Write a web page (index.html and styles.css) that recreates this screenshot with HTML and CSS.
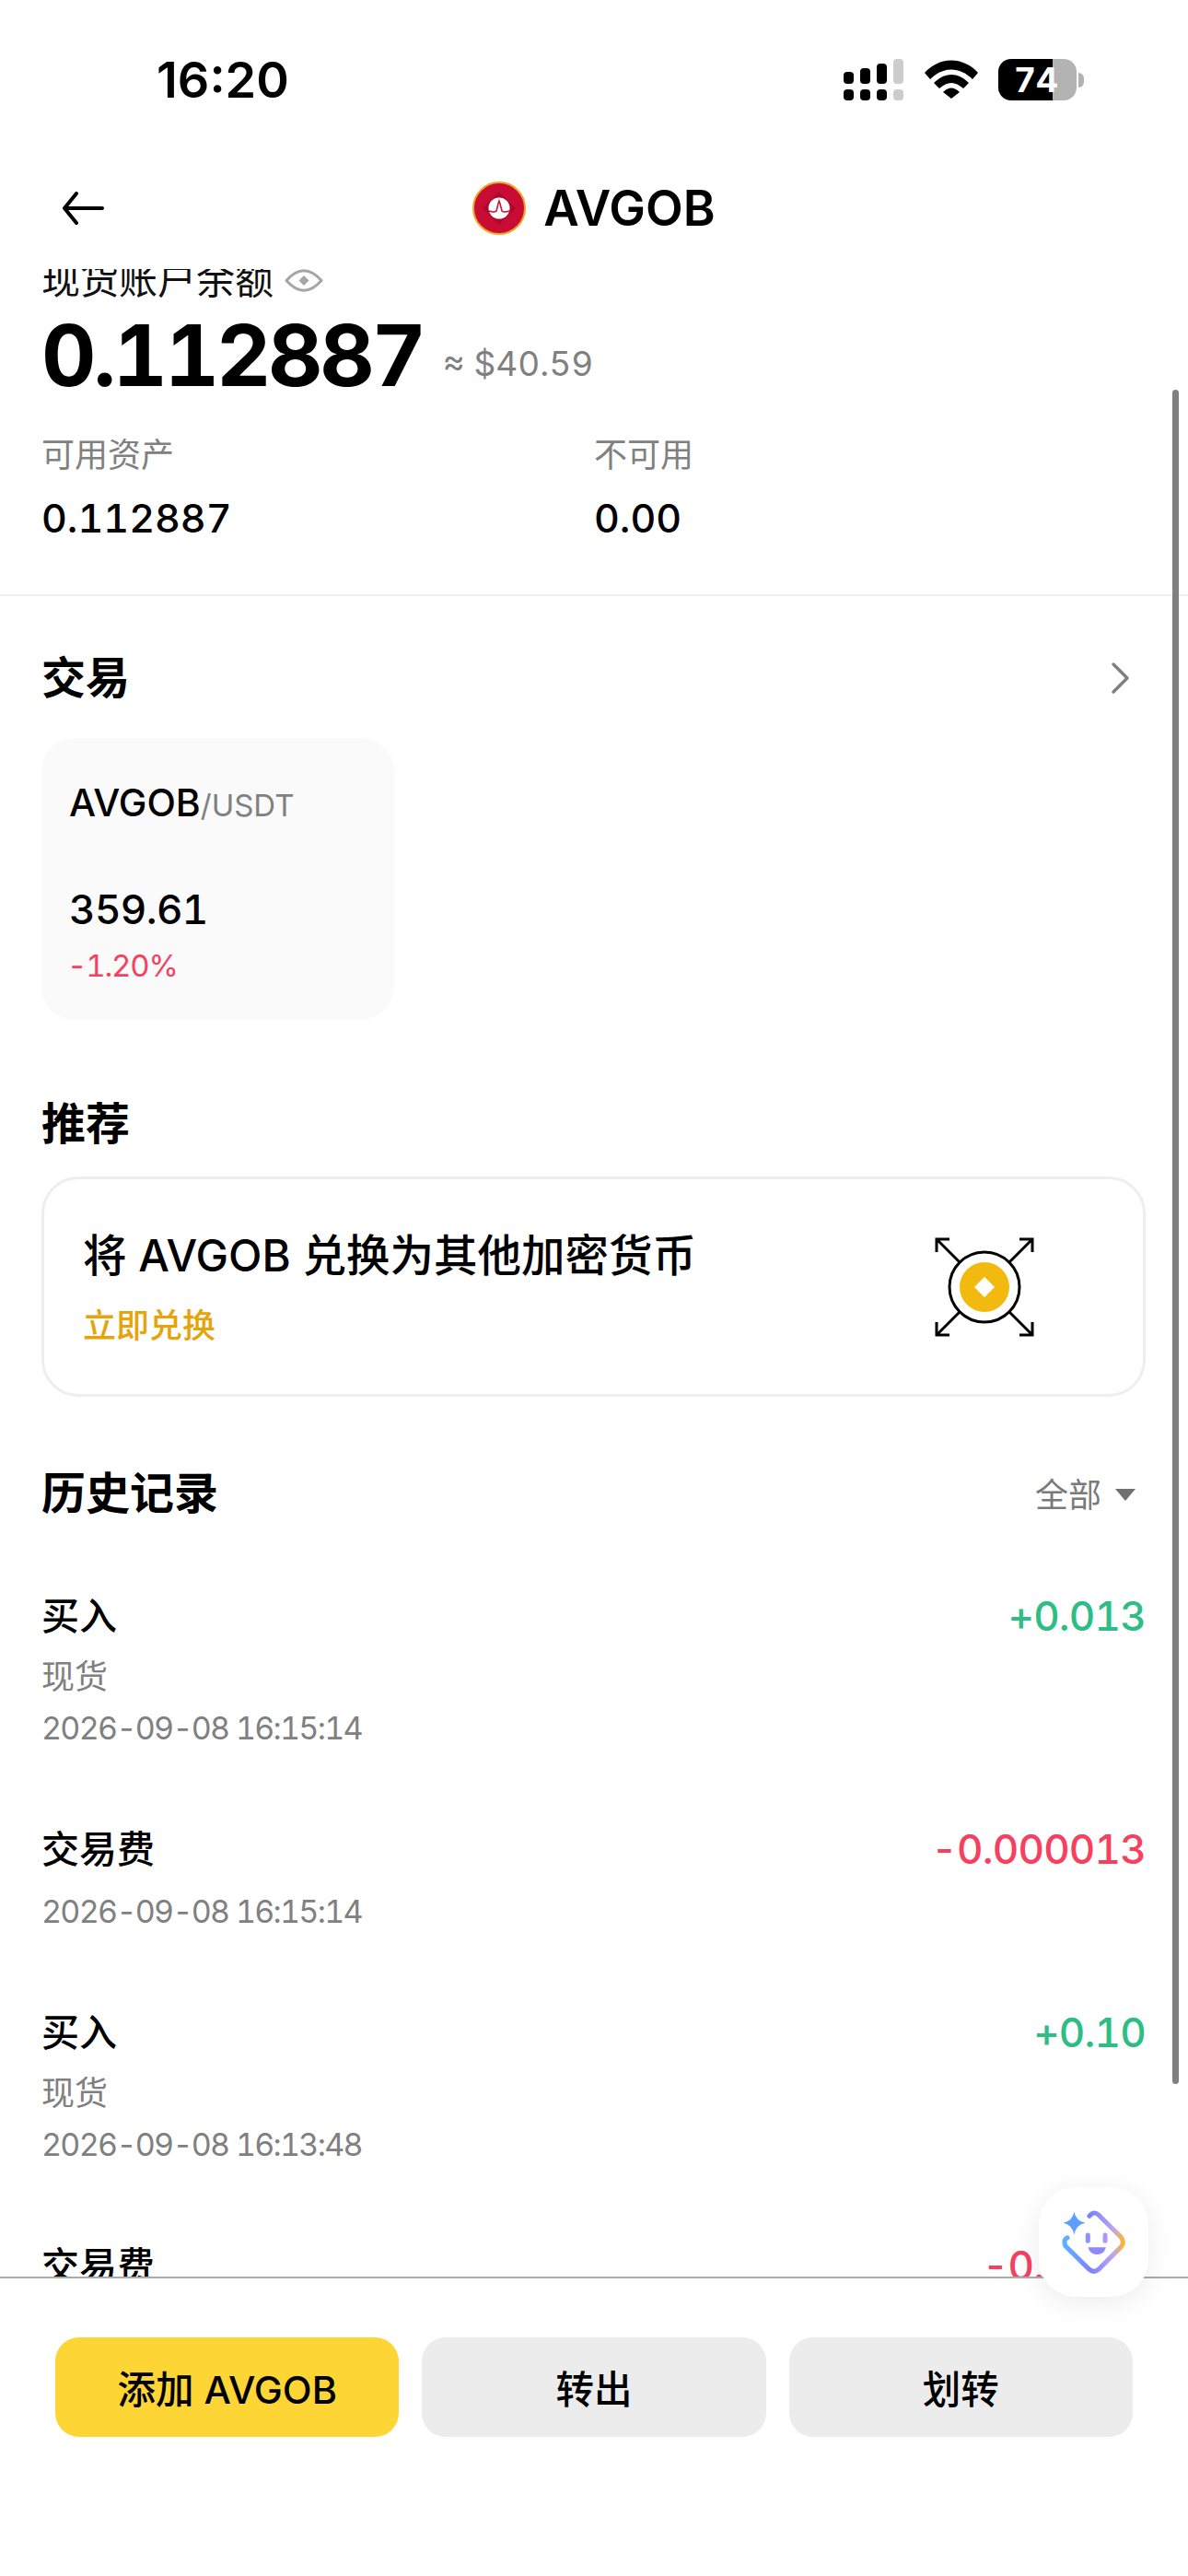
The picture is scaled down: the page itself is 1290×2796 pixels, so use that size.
FILE: index.html
```html
<!DOCTYPE html>
<html lang="zh">
<head>
<meta charset="UTF-8">
<meta name="viewport" content="width=device-width, initial-scale=1.0">
<title>AVGOB</title>
<link rel="stylesheet" href="styles.css">
</head>
<body>
    <div class="phone">
        <div class="status-bar">
            <div class="time">16:20</div>
            <div class="status-icons">
                <svg class="signal" width="65" height="45" viewBox="0 0 65 45">
                    <rect x="0" y="14" width="11" height="13" rx="4"/>
                    <rect x="18" y="10" width="11" height="17" rx="4"/>
                    <rect x="36" y="5" width="11" height="22" rx="4"/>
                    <rect x="54" y="0" width="11" height="27" rx="4" fill="#ccc"/>
                    <rect x="0" y="33" width="11" height="12" rx="4"/>
                    <rect x="18" y="33" width="11" height="12" rx="4"/>
                    <rect x="36" y="33" width="11" height="12" rx="4"/>
                    <rect x="54" y="33" width="11" height="12" rx="4" fill="#ccc"/>
                </svg>
                <svg class="wifi" width="58" height="42" viewBox="0 0 58 42">
                    <path d="M0 14 C16 -4 42 -4 58 14 L52 21 C38 7 20 7 6 21 Z"/>
                    <path d="M10 25 C22 13 36 13 48 25 L42 31 C33 23 25 23 16 31 Z"/>
                    <path d="M20 35 C26 29 32 29 38 35 L29 42 Z"/>
                </svg>
                <div class="battery-wrap">
                    <div class="battery">74</div>
                    <div class="battery-nub"></div>
                </div>
            </div>
        </div>

        <div class="header">
            <svg class="back" width="46" height="36" viewBox="0 0 46 36">
                <path d="M16 2 L3 18 L16 34 M3 18 H44" fill="none" stroke="#000" stroke-width="4" stroke-linecap="round" stroke-linejoin="round"/>
            </svg>
            <div class="coin">
                <svg width="58" height="58" viewBox="0 0 58 58">
                    <circle cx="29" cy="29" r="28" fill="#c90c33" stroke="#f2a323" stroke-width="2"/>
                    <path d="M29 11 L47 29 L29 47 L11 29 Z" fill="#ab0a2c"/>
                    <circle cx="29" cy="29" r="11.5" fill="#fff"/>
                    <path d="M18 32 Q24 34 26 32 L28 24 L29 21 L30 24 L32 32 Q34 34 40 32" fill="none" stroke="#c90c33" stroke-width="1.5"/>
                </svg>
                <span class="coin-name">AVGOB</span>
            </div>
        </div>

        <div class="scroll">
            <div class="content">
                <div class="balance-section">
                    <div class="label-row">
                        <span>现货账户余额</span>
                        <svg width="42" height="29" viewBox="0 0 42 29">
                            <path d="M2 14.5 Q21 -7 40 14.5 Q21 36 2 14.5 Z" fill="none" stroke="#a6a6a6" stroke-width="3" stroke-linejoin="round"/>
                            <path d="M21 9 L26.5 14.5 L21 20 L15.5 14.5 Z" fill="#a6a6a6"/>
                        </svg>
                    </div>
                    <div class="balance-row">
                        <span class="balance">0.112887</span>
                        <span class="approx">≈ $40.59</span>
                    </div>
                    <div class="assets">
                        <div class="asset">
                            <div class="asset-label">可用资产</div>
                            <div class="asset-value">0.112887</div>
                        </div>
                        <div class="asset">
                            <div class="asset-label">不可用</div>
                            <div class="asset-value">0.00</div>
                        </div>
                    </div>
                </div>

                <div class="section">
                    <div class="section-title trade-title">
                        <span>交易</span>
                        <svg width="24" height="36" viewBox="0 0 24 36">
                            <path d="M4 3 L19 18 L4 33" fill="none" stroke="#808080" stroke-width="3.5" stroke-linecap="round" stroke-linejoin="round"/>
                        </svg>
                    </div>
                    <div class="market-card">
                        <div class="pair">AVGOB<span class="quote">/USDT</span></div>
                        <div class="price">359.61</div>
                        <div class="change">-1.20%</div>
                    </div>

                    <div class="section-title recommend-title">推荐</div>
                    <div class="promo">
                        <div>
                            <div class="promo-title">将 AVGOB 兑换为其他加密货币</div>
                            <div class="promo-link">立即兑换</div>
                        </div>
                        <svg width="108" height="108" viewBox="0 0 108 108">
                            <g fill="none" stroke="#000" stroke-width="3">
                                <circle cx="54" cy="54" r="38"/>
                                <path d="M27 27 L2 2 M2 16 V2 H16 M81 27 L106 2 M92 2 H106 V16 M27 81 L2 106 M2 92 V106 H16 M81 81 L106 106 M92 106 H106 V92"/>
                            </g>
                            <circle cx="54" cy="54" r="27" fill="#f2ba0e"/>
                            <path d="M54 43 L65 54 L54 65 L43 54 Z" fill="#fff"/>
                        </svg>
                    </div>

                    <div class="history-head">
                        <div class="section-title">历史记录</div>
                        <div class="filter">全部<span class="caret"></span></div>
                    </div>

                    <div class="records">
                        <div class="record">
                            <div>
                                <div class="record-title">买入</div>
                                <div class="record-sub">现货</div>
                                <div class="record-date">2026-09-08 16:15:14</div>
                            </div>
                            <div class="amount up">+0.013</div>
                        </div>
                        <div class="record">
                            <div>
                                <div class="record-title">交易费</div>
                                <div class="record-date fee-date">2026-09-08 16:15:14</div>
                            </div>
                            <div class="amount down">-0.000013</div>
                        </div>
                        <div class="record">
                            <div>
                                <div class="record-title">买入</div>
                                <div class="record-sub">现货</div>
                                <div class="record-date">2026-09-08 16:13:48</div>
                            </div>
                            <div class="amount up">+0.10</div>
                        </div>
                        <div class="record">
                            <div>
                                <div class="record-title">交易费</div>
                                <div class="record-date fee-date">2026-09-08 16:13:48</div>
                            </div>
                            <div class="amount down">-0.0001</div>
                        </div>
                    </div>
                </div>
            </div>
            <div class="scrollbar"></div>
        </div>

        <div class="footer">
            <button class="btn primary">添加 AVGOB</button>
            <button class="btn">转出</button>
            <button class="btn">划转</button>
        </div>

        <div class="assistant">
            <svg width="77" height="75" viewBox="177 168 230 224">
                <defs>
                    <linearGradient id="ring" x1="0" y1="0" x2="1" y2="0">
                        <stop offset="0" stop-color="#5cb2ff"/>
                        <stop offset="0.45" stop-color="#7c84fb"/>
                        <stop offset="0.82" stop-color="#b9a2f5"/>
                        <stop offset="1" stop-color="#f6b73c"/>
                    </linearGradient>
                </defs>
                <path d="M207 266 Q193 272 200 292 L278 369 Q293 381 308 369 L381 296 Q393 280 381 264 L308 192 Q293 178 278 196" fill="none" stroke="url(#ring)" stroke-width="15" stroke-linecap="round"/>
                <path d="M229 182 Q235 212 265 218 Q235 224 229 256 Q223 224 193 218 Q223 212 229 182 Z" fill="#5c9fff"/>
                <rect x="266" y="250" width="15" height="34" rx="7" fill="#8f93fb"/>
                <rect x="322" y="250" width="15" height="34" rx="7" fill="#a99cf8"/>
                <path d="M274 297 H332 Q326 320 303 320 Q280 320 274 297 Z" fill="#8f87fa"/>
            </svg>
        </div>
    </div>
</body>
</html>
```

FILE: styles.css
```css
* {
    box-sizing: border-box;
}
body {
    margin: 0;
    background: #fff;
    color: #000;
    font-family: Inter, "Noto Sans CJK SC", sans-serif;
    font-variant-numeric: tabular-nums;
}
.phone {
    position: relative;
    width: 1290px;
    height: 2796px;
    display: flex;
    flex-direction: column;
    overflow: hidden;
}
.status-bar {
    height: 165px;
    flex-shrink: 0;
    display: flex;
    justify-content: space-between;
    align-items: flex-start;
    padding: 57px 113px 0 170px;
}
.time {
    font-size: 54px;
    line-height: 60px;
    font-weight: 600;
    font-variant-numeric: normal;
}
.status-icons {
    display: flex;
    align-items: flex-start;
    padding-top: 7px;
}
.signal {
    margin-right: 23px;
}
.wifi {
    margin-top: 1px;
    margin-right: 22px;
}
.battery-wrap {
    display: flex;
    align-items: center;
}
.battery {
    width: 85px;
    height: 45px;
    border-radius: 14px;
    background: linear-gradient(to right, #000 0, #000 70%, #b3b3b3 70%, #b3b3b3 100%);
    color: #fff;
    font-size: 37px;
    line-height: 45px;
    font-weight: 700;
    padding-left: 17px;
}
.battery-nub {
    width: 6px;
    height: 16px;
    margin-left: 2px;
    border-radius: 0 8px 8px 0;
    background: #b3b3b3;
}
.header {
    height: 127px;
    flex-shrink: 0;
    display: flex;
    align-items: center;
    justify-content: center;
    position: relative;
    padding-bottom: 6px;
}
.back {
    position: absolute;
    left: 67px;
    top: 43px;
}
.coin {
    display: flex;
    align-items: center;
    gap: 19px;
}
.coin svg {
    display: block;
}
.coin-name {
    font-size: 53px;
    line-height: 60px;
    font-weight: 600;
}
.scroll {
    flex: 1;
    position: relative;
    overflow: hidden;
}
.content {
    margin-top: -10px;
}
.balance-section {
    padding: 0 45px 57px;
    border-bottom: 2px solid #eee;
}
.label-row {
    display: flex;
    align-items: center;
    gap: 12px;
    font-size: 42px;
    line-height: 44px;
    color: #111;
}
.balance-row {
    display: flex;
    align-items: center;
    margin-top: 5px;
    line-height: 110px;
}
.balance {
    font-size: 92px;
    font-weight: 700;
    letter-spacing: -3.3px;
}
.approx {
    margin: 18px 0 0 21px;
    font-size: 37px;
    line-height: 44px;
    color: #808080;
}
.assets {
    display: flex;
    margin-top: 31px;
}
.asset {
    width: 600px;
}
.asset-label {
    font-size: 36px;
    line-height: 44px;
    color: #808080;
}
.asset-value {
    margin-top: 20px;
    font-size: 43px;
    line-height: 52px;
    font-weight: 500;
}
.section {
    padding: 59px 46px 0 45px;
}
.section-title {
    font-size: 48px;
    line-height: 60px;
    font-weight: 700;
}
.trade-title {
    display: flex;
    justify-content: space-between;
    align-items: center;
    padding-right: 15px;
}
.market-card {
    width: 383px;
    height: 306px;
    margin-top: 35px;
    padding: 45px 30px 0;
    background: #fafafa;
    border-radius: 36px;
}
.pair {
    font-size: 41px;
    line-height: 50px;
    font-weight: 500;
}
.quote {
    font-size: 33px;
    font-weight: 400;
    color: #808080;
}
.price {
    margin-top: 60px;
    font-size: 44px;
    line-height: 56px;
    font-weight: 500;
    letter-spacing: -0.6px;
}
.change {
    margin-top: 11px;
    margin-left: -2px;
    font-size: 33px;
    line-height: 44px;
    letter-spacing: -1.2px;
    color: #f5405f;
}
.recommend-title {
    margin-top: 83px;
}
.promo {
    height: 239px;
    margin-top: 27px;
    padding: 0 118px 0 42px;
    border: 3px solid #eee;
    border-radius: 40px;
    display: flex;
    align-items: center;
    justify-content: space-between;
}
.promo-title {
    font-size: 47.5px;
    line-height: 60px;
    font-weight: 500;
}
.promo-link {
    margin-top: 24px;
    font-size: 36px;
    line-height: 44px;
    font-weight: 500;
    color: #e5a50a;
}
.history-head {
    display: flex;
    justify-content: space-between;
    align-items: center;
    margin-top: 75px;
    padding-right: 11px;
}
.filter {
    display: flex;
    align-items: center;
    gap: 15px;
    margin-top: 3px;
    font-size: 36px;
    line-height: 44px;
    color: #7a7a7a;
}
.caret {
    width: 0;
    height: 0;
    border-left: 11px solid transparent;
    border-right: 11px solid transparent;
    border-top: 13px solid #707070;
}
.records {
    display: flex;
    flex-direction: column;
    gap: 83px;
    margin-top: 77px;
}
.record {
    display: flex;
    justify-content: space-between;
    align-items: flex-start;
}
.record-title {
    font-size: 41px;
    line-height: 52px;
    font-weight: 500;
}
.record-sub {
    margin-top: 18px;
    font-size: 36px;
    line-height: 44px;
    color: #808080;
}
.record-date {
    margin-top: 12px;
    font-size: 34px;
    line-height: 44px;
    letter-spacing: -1.7px;
    color: #808080;
}
.fee-date {
    margin-top: 20px;
}
.amount {
    font-size: 44px;
    line-height: 52px;
    font-weight: 500;
    letter-spacing: -0.8px;
}
.up {
    color: #2ebd85;
}
.down {
    color: #f5405f;
}
.scrollbar {
    position: absolute;
    top: 131px;
    right: 10px;
    width: 7px;
    height: 1839px;
    border-radius: 4px;
    background: #808080;
}
.footer {
    height: 325px;
    flex-shrink: 0;
    position: relative;
    background: #fff;
    border-top: 2px solid #aaa;
    display: flex;
    gap: 25px;
    padding: 64px 60px 0;
    align-items: flex-start;
}
.btn {
    width: 374px;
    height: 108px;
    border: none;
    border-radius: 26px;
    background: #ececec;
    color: #000;
    font-family: inherit;
    font-size: 41.5px;
    font-weight: 500;
}
.primary {
    background: #fdd535;
}
.assistant {
    position: absolute;
    left: 1128px;
    top: 2374px;
    width: 119px;
    height: 119px;
    border-radius: 40px;
    background: #fff;
    box-shadow: 0 6px 30px rgba(0,0,0,0.08);
    display: flex;
    align-items: center;
    justify-content: center;
}
```
